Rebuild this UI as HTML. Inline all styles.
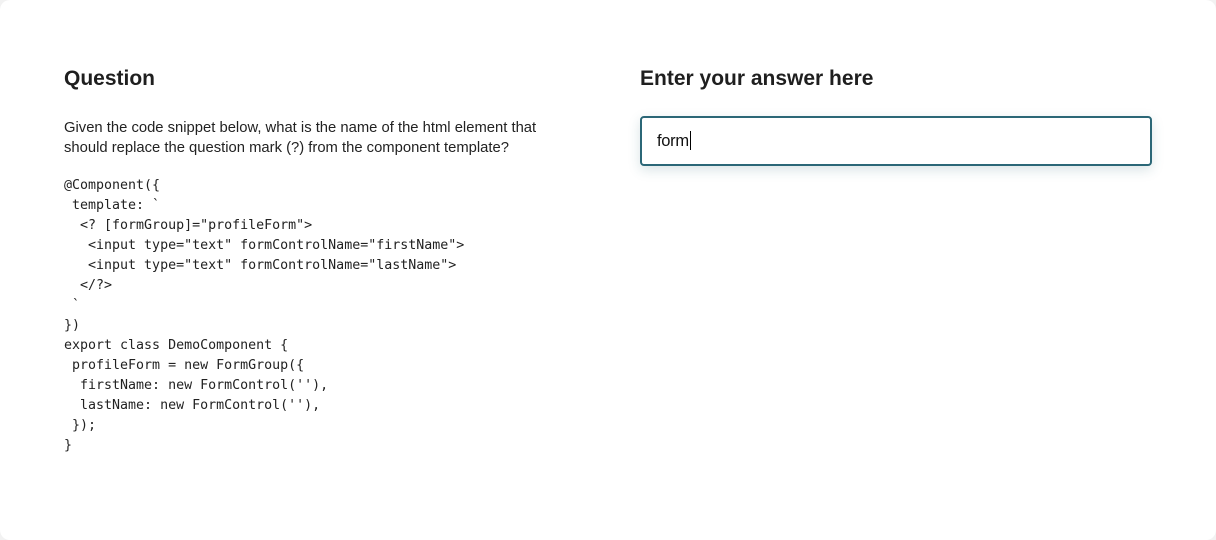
<!DOCTYPE html>
<html><head><meta charset="utf-8">
<style>
html,body{margin:0;padding:0;background:#f2f2f2;}
body{width:1216px;height:540px;overflow:hidden;}
.card{position:absolute;left:0;top:0;width:1216px;height:540px;background:#fff;border-radius:10px;}
h2{position:absolute;margin:0;font-family:"Liberation Sans",sans-serif;font-weight:bold;font-size:21px;color:#1f1f1f;}
.q{position:absolute;left:64px;top:118px;width:490px;font-family:"Liberation Sans",sans-serif;font-size:14.8px;line-height:20px;color:#222;}
pre{position:absolute;left:64px;top:176px;margin:0;font-family:"DejaVu Sans Mono",monospace;font-size:13.3px;line-height:20px;color:#222;}
.inp{position:absolute;left:640px;top:116px;width:508px;height:46px;border:2px solid #2b6777;border-radius:4px;box-shadow:0 4px 12px rgba(43,103,119,0.18);background:#fff;}
.inp span{position:absolute;left:15px;top:13px;font-family:"Liberation Sans",sans-serif;font-size:16.5px;color:#111;letter-spacing:-0.3px;}
.caret{display:inline-block;width:1px;height:19px;background:#000;vertical-align:-4px;margin-left:1px;}
</style></head><body>
<div class="card">
<h2 style="left:64px;top:67px;">Question</h2>
<div class="q">Given the code snippet below, what is the name of the html element that should replace the question mark (?) from the component template?</div>
<pre>@Component({
 template: `
  &lt;? [formGroup]="profileForm"&gt;
   &lt;input type="text" formControlName="firstName"&gt;
   &lt;input type="text" formControlName="lastName"&gt;
  &lt;/?&gt;
 `
})
export class DemoComponent {
 profileForm = new FormGroup({
  firstName: new FormControl(''),
  lastName: new FormControl(''),
 });
}</pre>
<h2 style="left:640px;top:67px;">Enter your answer here</h2>
<div class="inp"><span>form<i class="caret"></i></span></div>
</div>
</body></html>
